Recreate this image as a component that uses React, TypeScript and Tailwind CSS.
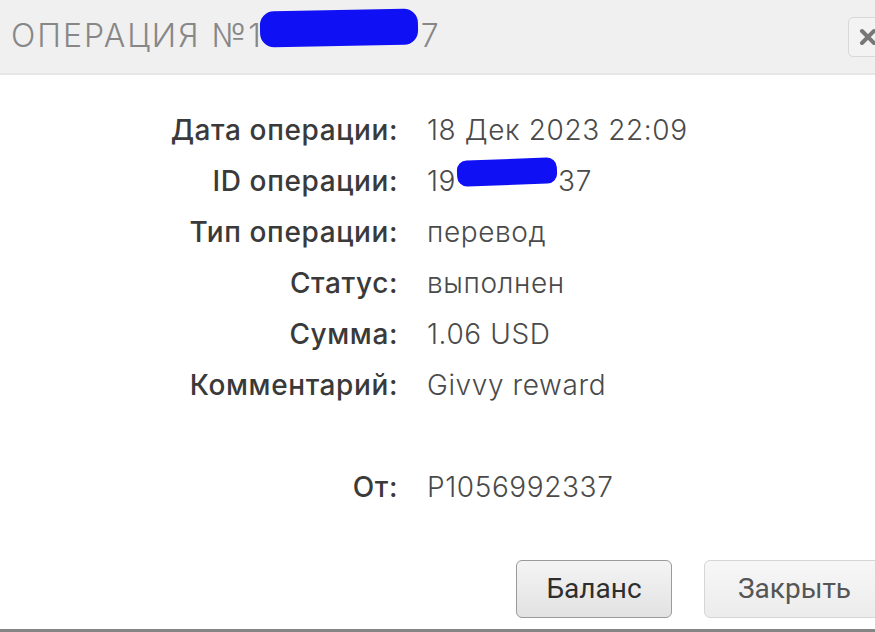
import React from "react";

const rows: { label: string; value: React.ReactNode }[] = [
  { label: "Дата операции:", value: "18 Дек 2023 22:09" },
  {
    label: "ID операции:",
    value: (
      <span className="relative">
        19
        <span className="inline-block w-[102px]" />
        37
        <span className="absolute left-[30px] top-[-1px] h-[26px] w-[100px] -rotate-2 rounded-[10px] bg-[#1010f5]" />
      </span>
    ),
  },
  { label: "Тип операции:", value: "перевод" },
  { label: "Статус:", value: "выполнен" },
  { label: "Сумма:", value: "1.06 USD" },
  { label: "Комментарий:", value: "Givvy reward" },
  { label: "", value: "" },
  { label: "От:", value: "P1056992337" },
];

export default function App() {
  return (
    <div className="flex h-[632px] w-[875px] flex-col overflow-hidden bg-white" style={{ fontFamily: "Inter, 'Open Sans', sans-serif" }}>
      <div className="flex h-[75px] shrink-0 items-start justify-between border-b-2 border-[#e6e6e6] bg-[#f0f0f0]">
        <div className="relative mt-[12px] pl-[11px] text-[32px] font-light tracking-[2px] text-[#878787]">
          ОПЕРАЦИЯ №1
          <span className="inline-block w-[158px]" />
          7
          <span className="absolute left-[260px] top-[-2px] h-[36px] w-[158px] -rotate-1 rounded-[14px] bg-[#1010f5]" />
        </div>
        <button className="mt-[17px] flex h-[40px] w-[40px] -mr-[13px] items-center justify-center rounded-[5px] border border-[#d8d8d8] bg-[#f3f3f3]">
          <svg width="18" height="18" viewBox="0 0 18 18">
            <path d="M3 3 L15 15 M15 3 L3 15" stroke="#777" strokeWidth="4" strokeLinecap="round" />
          </svg>
        </button>
      </div>

      <div className="grid grid-cols-[398px_1fr] gap-x-[29px] pt-[29px]">
        {rows.map((r, i) => (
          <React.Fragment key={i}>
            <div className="flex h-[51px] items-center justify-end text-[28px] font-medium tracking-[0.6px] text-[#3a3a3a]">{r.label}</div>
            <div className="flex h-[51px] items-center text-[28px] font-light tracking-[0.6px] text-[#4a4a4a]">{r.value}</div>
          </React.Fragment>
        ))}
      </div>

      <div className="mt-[48px] flex justify-end gap-[32px]" style={{ fontFamily: "Roboto, sans-serif" }}>
        <button className="h-[58px] w-[156px] rounded-[6px] border border-[#9a9a9a] bg-gradient-to-b from-[#f4f4f4] to-[#e2e2e2] text-[28px] text-[#2e2e2e]">
          Баланс
        </button>
        <button className="-mr-[10px] h-[58px] w-[181px] rounded-[6px] border border-[#d6d6d6] bg-gradient-to-b from-[#f7f7f7] to-[#ececec] text-[28px] text-[#555]">
          Закрыть
        </button>
      </div>
      <div className="mt-auto h-[3px] bg-[#858585]" />
    </div>
  );
}
